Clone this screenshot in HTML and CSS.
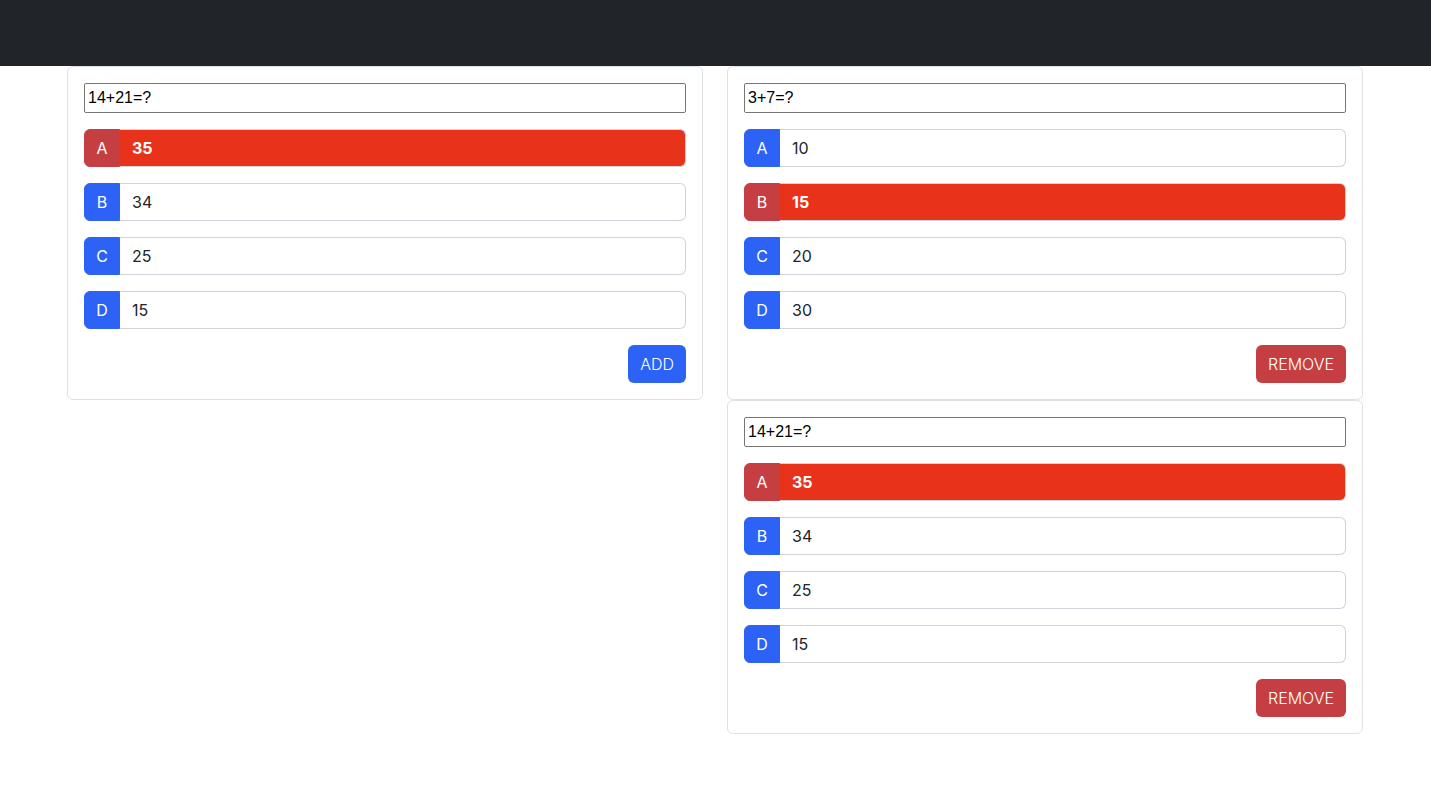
FILE: index.html
```html
<!DOCTYPE html>
<html>
<head>
<meta charset="utf-8">
<link rel="stylesheet" href="styles.css">
</head>
<body>
<header class="topbar"></header>
<main class="container">
  <div class="grid">
    <div class="col">
      <div class="card">
        <input class="question" value="14+21=?">
        <div class="opt"><span class="lbl lbl-red">A</span><span class="val val-red">35</span></div>
        <div class="opt"><span class="lbl">B</span><span class="val">34</span></div>
        <div class="opt"><span class="lbl">C</span><span class="val">25</span></div>
        <div class="opt"><span class="lbl">D</span><span class="val">15</span></div>
        <div class="actions"><button class="btn btn-blue">ADD</button></div>
      </div>
    </div>
    <div class="col">
      <div class="card">
        <input class="question" value="3+7=?">
        <div class="opt"><span class="lbl">A</span><span class="val">10</span></div>
        <div class="opt"><span class="lbl lbl-red">B</span><span class="val val-red">15</span></div>
        <div class="opt"><span class="lbl">C</span><span class="val">20</span></div>
        <div class="opt"><span class="lbl">D</span><span class="val">30</span></div>
        <div class="actions"><button class="btn btn-red">REMOVE</button></div>
      </div>
      <div class="card">
        <input class="question" value="14+21=?">
        <div class="opt"><span class="lbl lbl-red">A</span><span class="val val-red">35</span></div>
        <div class="opt"><span class="lbl">B</span><span class="val">34</span></div>
        <div class="opt"><span class="lbl">C</span><span class="val">25</span></div>
        <div class="opt"><span class="lbl">D</span><span class="val">15</span></div>
        <div class="actions"><button class="btn btn-red">REMOVE</button></div>
      </div>
    </div>
  </div>
</main>
</body>
</html>
```

FILE: styles.css
```css
* { box-sizing: border-box; }
html, body { margin: 0; padding: 0; }
body {
  font-family: Inter, "Liberation Sans", sans-serif;
  font-size: 16px;
  color: #212529;
  background: #fff;
}
.topbar {
  height: 66px;
  background: #212529;
}
.container {
  width: 1320px;
  margin-left: calc(50% - 660.5px);
  padding: 0 12px;
}
.grid {
  display: grid;
  grid-template-columns: 1fr 1fr;
  column-gap: 24px;
  align-items: start;
}
.col { display: flex; flex-direction: column; }
.card {
  border: 1px solid #dee2e6;
  border-radius: 6px;
  padding: 16px;
  display: flex;
  flex-direction: column;
  gap: 16px;
  background: #fff;
}
.question {
  height: 30px;
  width: 100%;
  border: 1px solid #767676;
  border-radius: 2px;
  padding: 0 3px;
  font-family: "Liberation Sans", Arial, sans-serif;
  font-size: 16px;
  color: #000;
  outline: none;
}
.opt {
  display: flex;
  height: 38px;
}
.lbl {
  display: flex;
  align-items: center;
  justify-content: center;
  width: 36px;
  padding: 0;
  background: #2c63f6;
  color: #fff;
  border: 1px solid #2c63f6;
  border-radius: 6px 0 0 6px;
  line-height: 1;
}
.lbl-red { background: #c53f42; border-color: #c53f42; }
.val {
  flex: 1;
  display: flex;
  align-items: center;
  padding: 0 12px;
  border: 1px solid #ced4da;
  border-left: none;
  border-radius: 0 6px 6px 0;
  color: #212529;
}
.val-red {
  background: #e8321a;
  color: #fff;
  font-weight: 700;
  border-color: #ced4da;
}
.actions {
  display: flex;
  justify-content: flex-end;
}
.btn {
  height: 38px;
  padding: 0 12px;
  border: none;
  border-radius: 6px;
  color: #fff;
  font-family: Inter, "Liberation Sans", sans-serif;
  font-size: 16px;
  font-weight: 300;
  cursor: pointer;
}
.btn-blue { background: #2c63f6; }
.btn-red { background: #c53f42; }
```
